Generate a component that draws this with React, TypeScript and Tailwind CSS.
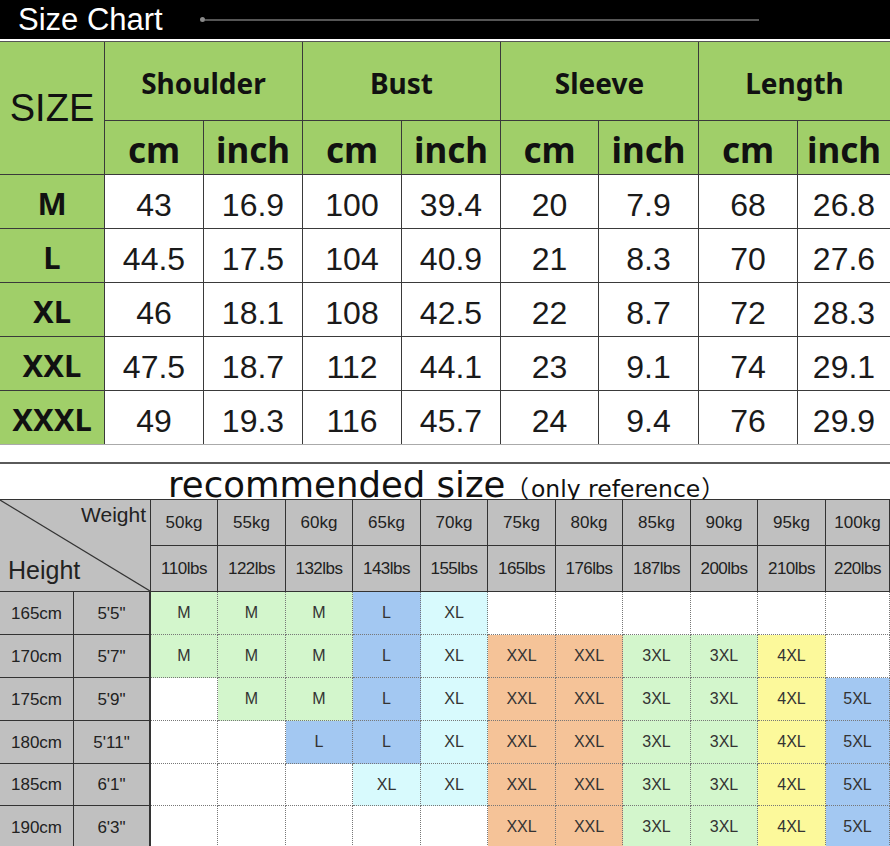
import React from "react";

// top measurement chart
const measureRows = [
  ["M", "43", "16.9", "100", "39.4", "20", "7.9", "68", "26.8"],
  ["L", "44.5", "17.5", "104", "40.9", "21", "8.3", "70", "27.6"],
  ["XL", "46", "18.1", "108", "42.5", "22", "8.7", "72", "28.3"],
  ["XXL", "47.5", "18.7", "112", "44.1", "23", "9.1", "74", "29.1"],
  ["XXXL", "49", "19.3", "116", "45.7", "24", "9.4", "76", "29.9"],
];

const groups = ["Shoulder", "Bust", "Sleeve", "Length"];

const weights = [
  ["50kg", "110lbs"],
  ["55kg", "122lbs"],
  ["60kg", "132lbs"],
  ["65kg", "143lbs"],
  ["70kg", "155lbs"],
  ["75kg", "165lbs"],
  ["80kg", "176lbs"],
  ["85kg", "187lbs"],
  ["90kg", "200lbs"],
  ["95kg", "210lbs"],
  ["100kg", "220lbs"],
];

const recRows: [string, string, string[]][] = [
  ["165cm", "5'5\"", ["M", "M", "M", "L", "XL", "", "", "", "", "", ""]],
  ["170cm", "5'7\"", ["M", "M", "M", "L", "XL", "XXL", "XXL", "3XL", "3XL", "4XL", ""]],
  ["175cm", "5'9\"", ["", "M", "M", "L", "XL", "XXL", "XXL", "3XL", "3XL", "4XL", "5XL"]],
  ["180cm", "5'11\"", ["", "", "L", "L", "XL", "XXL", "XXL", "3XL", "3XL", "4XL", "5XL"]],
  ["185cm", "6'1\"", ["", "", "", "XL", "XL", "XXL", "XXL", "3XL", "3XL", "4XL", "5XL"]],
  ["190cm", "6'3\"", ["", "", "", "", "", "XXL", "XXL", "3XL", "3XL", "4XL", "5XL"]],
];

const sizeBg: Record<string, string> = {
  M: "bg-[#d3f6cc]",
  L: "bg-[#a3c8f2]",
  XL: "bg-[#d8fafd]",
  XXL: "bg-[#f5c398]",
  "3XL": "bg-[#d3f6cc]",
  "4XL": "bg-[#fcf99b]",
  "5XL": "bg-[#a3c8f2]",
  "": "bg-white",
};

const bold = "font-['Noto_Sans',sans-serif] font-bold text-[#111]";
const arial = "font-['Liberation_Sans',Arial,sans-serif]";
const cjk = "font-['Noto_Sans_CJK_SC',sans-serif]";

export default function App() {
  return (
    <div className="w-[890px] h-[846px] overflow-hidden bg-white">
      {/* Title bar */}
      <div className="h-[39px] bg-black flex items-center">
        <span className={`${arial} pl-[18px] w-[200px] shrink-0 text-[31px] leading-none text-white`}>
          Size Chart
        </span>
        <span className="w-[5px] h-[5px] rounded-full bg-[#8a8a8a] shrink-0" />
        <div className="w-[554px] h-[2px] bg-[#555]" />
      </div>
      <div className="h-[2px] bg-white" />

      {/* Measurement table */}
      <div className="grid grid-cols-[104px_98px_98px_98px_98px_97px_99px_98px_1fr] grid-rows-[78px_53px_53px_53px_53px_53px_53px] gap-px bg-[#3a3a3a] border-t border-[#555] border-b border-b-[#aaa]">
        <div className={`row-span-2 bg-[#a0cf69] flex items-center justify-center ${arial} text-[38px] leading-none text-[#111]`}>
          SIZE
        </div>
        {groups.map((g) => (
          <div
            key={g}
            className={`col-span-2 bg-[#a0cf69] flex items-center justify-center pt-[4px] ${bold} text-[28px] leading-none`}
          >
            {g}
          </div>
        ))}
        {groups.map((g) => (
          <React.Fragment key={g + "-u"}>
            <div className={`bg-[#a0cf69] flex items-center justify-center pt-[4px] ${bold} text-[35px] leading-none`}>
              cm
            </div>
            <div className={`bg-[#a0cf69] flex items-center justify-center pt-[4px] ${bold} text-[35px] leading-none`}>
              inch
            </div>
          </React.Fragment>
        ))}
        {measureRows.map((row) => (
          <React.Fragment key={row[0]}>
            <div className={`bg-[#a0cf69] flex items-center justify-center pt-[4px] ${bold} text-[31px] leading-none`}>
              {row[0]}
            </div>
            {row.slice(1).map((v, i) => (
              <div
                key={i}
                className={`bg-white flex items-center justify-center pt-[7px] ${arial} text-[32px] leading-none text-[#1a1a1a]`}
              >
                {v}
              </div>
            ))}
          </React.Fragment>
        ))}
      </div>

      {/* Recommended size */}
      <div className="h-[17px]" />
      <div className="h-[2px] bg-[#5a5a5a]" />
      <div className="h-[35px] pl-[168px] pt-[3px] font-['DejaVu_Sans','Noto_Sans_CJK_SC',sans-serif] leading-none text-[#111] whitespace-nowrap">
        <span className="text-[35.5px]">recommended size</span>
        <span className="text-[23.5px]">
          <span className={`${cjk} mr-[2px]`}>（</span>only reference<span className={`${cjk} ml-[1px]`}>）</span>
        </span>
      </div>

      <div className={`grid grid-cols-[74px_77px_67px_68px_67px_68px_67px_68px_67px_68px_67px_68px_1fr] grid-rows-[46px_46px_43px_43px_43px_43px_42px_43px] border-t border-[#333] ${arial}`}>
        <div className="col-span-2 row-span-2 relative bg-[#c0c0c0] border-r border-b border-[#333] flex flex-col justify-between pb-[8px]">
          <svg className="absolute inset-0 w-full h-full" viewBox="0 0 150 91" preserveAspectRatio="none">
            <line x1="0" y1="0" x2="150" y2="91" stroke="#333" strokeWidth="1.2" />
          </svg>
          <span className="self-end pr-[4px] pt-[4px] text-[21px] leading-none text-[#222]">Weight</span>
          <span className="pl-[8px] text-[25px] leading-none text-[#222]">Height</span>
        </div>
        {weights.map(([kg]) => (
          <div
            key={kg}
            className="bg-[#c0c0c0] border-r border-b border-[#333] flex items-center justify-center text-[17px] leading-none text-[#222]"
          >
            {kg}
          </div>
        ))}
        {weights.map(([, lbs]) => (
          <div
            key={lbs}
            className="bg-[#c0c0c0] border-r border-b border-[#333] flex items-center justify-center text-[17px] tracking-[-0.5px] leading-none text-[#222]"
          >
            {lbs}
          </div>
        ))}
        {recRows.map(([cm, ft, sizes]) => (
          <React.Fragment key={cm}>
            <div className="bg-[#c0c0c0] border-r border-b border-[#333] flex items-center justify-center text-[17px] leading-none text-[#222]">
              {cm}
            </div>
            <div className="bg-[#c0c0c0] border-r-2 border-b border-[#333] flex items-center justify-center text-[17px] leading-none text-[#222]">
              {ft}
            </div>
            {sizes.map((s, i) => (
              <div
                key={i}
                className={`${sizeBg[s]} border-r border-b border-dotted border-[#777] flex items-center justify-center text-[16px] leading-none text-[#333]`}
              >
                {s}
              </div>
            ))}
          </React.Fragment>
        ))}
      </div>
    </div>
  );
}
